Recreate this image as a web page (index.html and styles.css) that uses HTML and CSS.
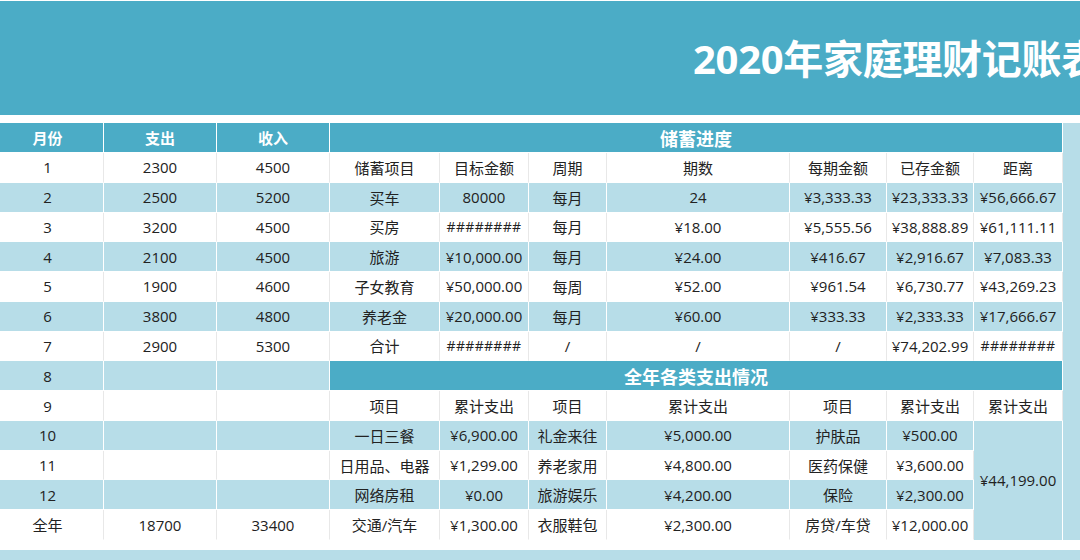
FILE: index.html
```html
<!DOCTYPE html>
<html lang="zh-CN">
<head>
<meta charset="utf-8">
<title>2020年家庭理财记账表</title>
<link rel="stylesheet" href="styles.css">
</head>
<body>
<header class="banner"><h1 class="title">2020年家庭理财记账表</h1></header>
<main class="sheet">
  <div class="strip"></div>

  <div class="c hd a">月份</div><div class="c hd">支出</div><div class="c hd">收入</div>
  <div class="c hd sect">储蓄进度</div>

  <div class="c a">1</div><div class="c">2300</div><div class="c">4500</div>
  <div class="c">储蓄项目</div><div class="c">目标金额</div><div class="c">周期</div><div class="c">期数</div><div class="c">每期金额</div><div class="c">已存金额</div><div class="c">距离</div>

  <div class="c lt a">2</div><div class="c lt">2500</div><div class="c lt">5200</div>
  <div class="c lt">买车</div><div class="c lt">80000</div><div class="c lt">每月</div><div class="c lt">24</div><div class="c lt">¥3,333.33</div><div class="c lt">¥23,333.33</div><div class="c lt">¥56,666.67</div>

  <div class="c a">3</div><div class="c">3200</div><div class="c">4500</div>
  <div class="c">买房</div><div class="c hash">########</div><div class="c">每月</div><div class="c">¥18.00</div><div class="c">¥5,555.56</div><div class="c">¥38,888.89</div><div class="c">¥61,111.11</div>

  <div class="c lt a">4</div><div class="c lt">2100</div><div class="c lt">4500</div>
  <div class="c lt">旅游</div><div class="c lt">¥10,000.00</div><div class="c lt">每月</div><div class="c lt">¥24.00</div><div class="c lt">¥416.67</div><div class="c lt">¥2,916.67</div><div class="c lt">¥7,083.33</div>

  <div class="c a">5</div><div class="c">1900</div><div class="c">4600</div>
  <div class="c">子女教育</div><div class="c">¥50,000.00</div><div class="c">每周</div><div class="c">¥52.00</div><div class="c">¥961.54</div><div class="c">¥6,730.77</div><div class="c">¥43,269.23</div>

  <div class="c lt a">6</div><div class="c lt">3800</div><div class="c lt">4800</div>
  <div class="c lt">养老金</div><div class="c lt">¥20,000.00</div><div class="c lt">每月</div><div class="c lt">¥60.00</div><div class="c lt">¥333.33</div><div class="c lt">¥2,333.33</div><div class="c lt">¥17,666.67</div>

  <div class="c a">7</div><div class="c">2900</div><div class="c">5300</div>
  <div class="c">合计</div><div class="c hash">########</div><div class="c">/</div><div class="c">/</div><div class="c">/</div><div class="c">¥74,202.99</div><div class="c hash">########</div>

  <div class="c lt a">8</div><div class="c lt"></div><div class="c lt"></div>
  <div class="c hd sect">全年各类支出情况</div>

  <div class="c a">9</div><div class="c"></div><div class="c"></div>
  <div class="c">项目</div><div class="c">累计支出</div><div class="c">项目</div><div class="c">累计支出</div><div class="c">项目</div><div class="c">累计支出</div><div class="c">累计支出</div>

  <div class="c lt a">10</div><div class="c lt"></div><div class="c lt"></div>
  <div class="c lt">一日三餐</div><div class="c lt">¥6,900.00</div><div class="c lt">礼金来往</div><div class="c lt">¥5,000.00</div><div class="c lt">护肤品</div><div class="c lt">¥500.00</div>
  <div class="c lt total">¥44,199.00</div>

  <div class="c a">11</div><div class="c"></div><div class="c"></div>
  <div class="c">日用品、电器</div><div class="c">¥1,299.00</div><div class="c">养老家用</div><div class="c">¥4,800.00</div><div class="c">医药保健</div><div class="c">¥3,600.00</div>

  <div class="c lt a">12</div><div class="c lt"></div><div class="c lt"></div>
  <div class="c lt">网络房租</div><div class="c lt">¥0.00</div><div class="c lt">旅游娱乐</div><div class="c lt">¥4,200.00</div><div class="c lt">保险</div><div class="c lt">¥2,300.00</div>

  <div class="c a">全年</div><div class="c">18700</div><div class="c">33400</div>
  <div class="c">交通/汽车</div><div class="c">¥1,300.00</div><div class="c">衣服鞋包</div><div class="c">¥2,300.00</div><div class="c">房贷/车贷</div><div class="c">¥12,000.00</div>
</main>
<div class="footbar"></div>
</body>
</html>
```
FILE: styles.css
```css
html, body {
  margin: 0;
  padding: 0;
  background: #ffffff;
  overflow: hidden;
}

body {
  width: 1080px;
  height: 560px;
  font-family: "Open Sans", "Noto Sans CJK SC", sans-serif;
  color: #222222;
}

.banner {
  margin-top: 1px;
  height: 114px;
  background: #4BACC6;
  display: flex;
  align-items: center;
  overflow: hidden;
  margin-bottom: 8px;
}

.title {
  margin: 0;
  padding-left: 693px;
  padding-top: 2px;
  white-space: nowrap;
  font-family: "Open Sans", "Noto Sans CJK SC", sans-serif;
  font-weight: 700;
  font-size: 40px;
  line-height: 1;
  color: #ffffff;
  letter-spacing: -0.3px;
}

.sheet {
  display: grid;
  grid-template-columns: 104px 113px 113px 110px 89px 78px 183px 97px 87px 89px 1fr;
  grid-template-rows: 30px repeat(13, 29.77px);
}

.strip {
  grid-column: 11;
  grid-row: 1 / span 14;
  background: #B7DDE8;
}

.c {
  box-sizing: border-box;
  display: flex;
  align-items: center;
  justify-content: center;
  white-space: nowrap;
  font-size: 15px;
  background: #ffffff;
  border-right: 1px solid #e8e8e8;
  border-bottom: 1px solid #ffffff;
  overflow: hidden;
}

.c.lt {
  background: #B7DDE8;
  border-right-color: #ffffff;
}

.c.hd {
  background: #4BACC6;
  color: #ffffff;
  font-weight: 700;
  border-right-color: #ffffff;
}

.c.a {
  padding-right: 8px;
}

.sect {
  grid-column: 4 / span 7;
  font-size: 18px;
}

.total {
  grid-column: 10;
  grid-row: span 4;
  border-bottom: 0;
}

.hash {
  letter-spacing: 0.3px;
  font-size: 14px;
}

.footbar {
  margin-top: 10px;
  height: 20px;
  background: #B7DDE8;
}
```
